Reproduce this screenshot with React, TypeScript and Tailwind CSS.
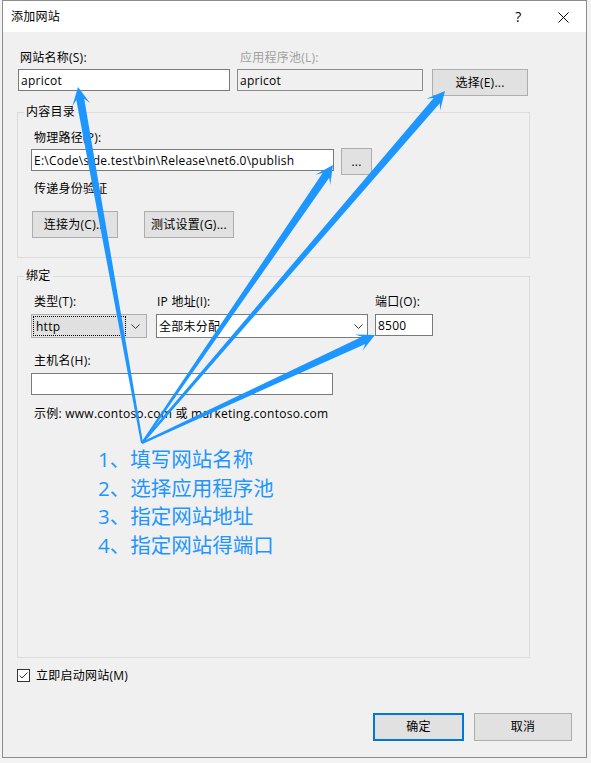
import React from 'react';

const BLUE = '#1e96ff';

type Pt = [number, number];

// tapered annotation arrow from tail t to tip h
function arrowPoints(t: Pt, h: Pt, hl = 18, hw = 9, sw = 4, tw = 1): string {
  const dx = h[0] - t[0];
  const dy = h[1] - t[1];
  const L = Math.hypot(dx, dy);
  const ux = dx / L;
  const uy = dy / L;
  const nx = -uy;
  const ny = ux;
  const at = (d: number, w: number): Pt => [t[0] + ux * d + nx * w, t[1] + uy * d + ny * w];
  const pts: Pt[] = [
    at(0, -tw),
    at(L - hl * 0.7, -sw),
    at(L - hl, -hw),
    h,
    at(L - hl, hw),
    at(L - hl * 0.7, sw),
    at(0, tw),
  ];
  return pts.map((p) => p.map((v) => v.toFixed(1)).join(',')).join(' ');
}

const arrows: Pt[] = [
  [78, 87],
  [333, 165],
  [445, 91],
  [375, 335],
];

function Btn({ className, children }: { className: string; children: React.ReactNode }) {
  return (
    <div className={`flex items-center justify-center bg-[#e1e1e1] border border-[#adadad] ${className}`}>
      {children}
    </div>
  );
}

function TextBox({ className, children }: { className: string; children?: React.ReactNode }) {
  return (
    <div className={`flex items-center bg-white border border-[#7a7a7a] pl-[2px] pt-[1px] ${className}`}>{children}</div>
  );
}

function Chevron() {
  return (
    <svg width="9" height="5" viewBox="0 0 9 5" className="shrink-0">
      <polyline points="0.5,0.5 4.5,4.5 8.5,0.5" fill="none" stroke="#333" strokeWidth="1" />
    </svg>
  );
}

export default function App() {
  return (
    <div className="relative w-[591px] h-[763px] overflow-hidden bg-[#f3f3f3] pl-[2px] text-[12px] leading-[16px] tracking-[0.25px] text-black font-['Open_Sans','Noto_Sans_CJK_SC',sans-serif]">
      <div className="w-[585px] h-[758px] border border-[#8c8c8c] bg-[#f0f0f0] flex flex-col">
        {/* title bar */}
        <div className="h-[31px] bg-white flex items-center pl-[8px] pt-[1px]">
          <span>添加网站</span>
          <div className="ml-auto flex h-full">
            <div className="w-[45px] flex items-center justify-center text-[14px]">?</div>
            <div className="w-[45px] flex items-center justify-center">
              <svg width="11" height="11" viewBox="0 0 11 11">
                <path d="M0.5 0.5 L10.5 10.5 M10.5 0.5 L0.5 10.5" stroke="#000" strokeWidth="1" />
              </svg>
            </div>
          </div>
        </div>

        {/* name / pool */}
        <div className="flex items-start pl-[15px] pt-[17px]">
          <div className="w-[212px]">
            <div className="pl-[2px] pt-[1px] h-[16px]">网站名称(S):</div>
            <TextBox className="mt-[4px] h-[22px] w-full">apricot</TextBox>
          </div>
          <div className="ml-[7px] w-[186px]">
            <div className="pl-[3px] pt-[1px] h-[16px] text-[#a0a0a0]">应用程序池(L):</div>
            <div className="mt-[4px] h-[22px] w-full flex items-center bg-[#f0f0f0] border border-[#8a8a8a] pl-[2px] pt-[1px]">
              apricot
            </div>
          </div>
          <Btn className="ml-[9px] mt-[20px] w-[96px] h-[27px]">选择(E)...</Btn>
        </div>

        {/* content directory */}
        <fieldset className="mt-[8px] ml-[14px] w-[513px] border border-[#dcdcdc]">
          <legend className="ml-[6px] px-[2px]">内容目录</legend>
          <div className="pl-[13px] pt-[9px] pb-[19px]">
            <div className="ml-[3px] pt-[1px] h-[16px]">物理路径(P):</div>
            <div className="mt-[3px] flex items-start">
              <TextBox className="mt-[1px] w-[303px] h-[22px]">E:\Code\side.test\bin\Release\net6.0\publish</TextBox>
              <Btn className="ml-[7px] w-[31px] h-[27px]">...</Btn>
            </div>
            <div className="mt-[5px] ml-[3px] pt-[1px] h-[16px]">传递身份验证</div>
            <div className="mt-[15px] flex">
              <Btn className="ml-[1px] w-[86px] h-[27px]">连接为(C)...</Btn>
              <Btn className="ml-[26px] w-[90px] h-[27px]">测试设置(G)...</Btn>
            </div>
          </div>
        </fieldset>

        {/* binding */}
        <fieldset className="mt-[10px] ml-[14px] w-[513px] border border-[#dcdcdc]">
          <legend className="ml-[6px] px-[2px]">绑定</legend>
          <div className="h-[373px] pl-[13px] pt-[9px]">
            <div className="flex items-start">
              <div className="w-[116px]">
                <div className="pl-[3px] pt-[1px] h-[16px]">类型(T):</div>
                <div className="mt-[5px] h-[24px] flex items-center bg-[#e5e5e5] border border-[#adadad] pr-[6px]">
                  <div className="ml-[1px] w-[93px] h-[20px] flex items-center pl-[2px] pt-[1px] border border-dotted border-black bg-[#e0e0e0]">
                    http
                  </div>
                  <div className="ml-auto">
                    <Chevron />
                  </div>
                </div>
              </div>
              <div className="ml-[9px] w-[212px]">
                <div className="pl-[1px] pt-[1px] h-[16px]">IP 地址(I):</div>
                <div className="mt-[5px] h-[24px] flex items-center bg-white border border-[#7a7a7a] pl-[2px] pt-[1px] pr-[4px]">
                  <span>全部未分配</span>
                  <div className="ml-auto">
                    <Chevron />
                  </div>
                </div>
              </div>
              <div className="ml-[7px] w-[58px]">
                <div className="pt-[1px] h-[16px]">端口(O):</div>
                <TextBox className="mt-[5px] h-[22px] w-full">8500</TextBox>
              </div>
            </div>
            <div className="mt-[14px] ml-[3px] pt-[1px] h-[16px]">主机名(H):</div>
            <TextBox className="mt-[5px] w-[302px] h-[22px]" />
            <div className="mt-[10px] ml-[3px] pt-[1px] h-[16px]">示例: www.contoso.com 或 marketing.contoso.com</div>
            <div className="mt-[24px] ml-[67px] text-[20.5px] leading-[28.5px] tracking-normal text-[#1e96ff]">
              <div>1、填写网站名称</div>
              <div>2、选择应用程序池</div>
              <div>3、指定网站地址</div>
              <div>4、指定网站得端口</div>
            </div>
          </div>
        </fieldset>

        {/* start immediately */}
        <div className="mt-[9px] ml-[14px] flex items-center">
          <svg width="13" height="13" viewBox="0 0 13 13" className="shrink-0">
            <rect x="0.5" y="0.5" width="12" height="12" fill="#fff" stroke="#333" />
            <polyline points="2.5,6.5 5,9 10.5,3.5" fill="none" stroke="#333" strokeWidth="1" />
          </svg>
          <span className="ml-[6px] pt-[1px]">立即启动网站(M)</span>
        </div>

        {/* footer */}
        <div className="mt-auto flex justify-end gap-[10px] pr-[14px] pb-[16px]">
          <div className="w-[91px] h-[28px] flex items-center justify-center bg-[#e1e1e1] border-2 border-[#0078d7]">
            确定
          </div>
          <Btn className="w-[98px] h-[28px]">取消</Btn>
        </div>
      </div>

      {/* annotation arrows */}
      <svg className="absolute inset-0 pointer-events-none" width="591" height="763" viewBox="0 0 591 763">
        {arrows.map((h, i) => (
          <polygon key={i} points={arrowPoints([142, 443], h)} fill={BLUE} />
        ))}
      </svg>
    </div>
  );
}
